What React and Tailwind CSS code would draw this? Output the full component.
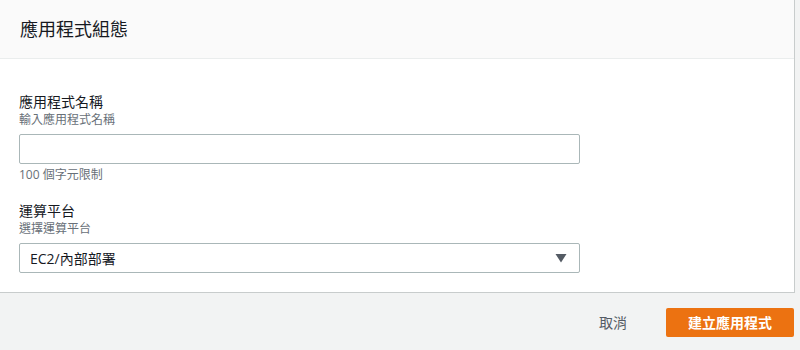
import React from 'react';

const font = { fontFamily: '"Open Sans", "Noto Sans CJK TC", sans-serif' };

const Field = ({ label, desc, children, hint }) => (
    <div className="flex flex-col">
        <div className="text-[14px] leading-[20px] text-[#16191f]">{label}</div>
        <div className="text-[12px] leading-[16px] text-[#687078]">{desc}</div>
        <div className="mt-[6px]">{children}</div>
        {hint && <div className="mt-[3px] text-[12px] leading-[16px] text-[#687078]">{hint}</div>}
    </div>
);

export default function App() {
    return (
        <div className="w-[800px] h-[350px] bg-[#f2f3f3] flex flex-col" style={font}>
            {/* Panel */}
            <div className="w-[795px] bg-white border-r border-b border-[#c8cccc]">
                <div className="h-[59px] bg-[#fafafa] border-b border-[#eaeded] flex items-center px-[20px]">
                    <h2 className="text-[18px] text-[#16191f]">應用程式組態</h2>
                </div>
                <div className="pt-[33px] pb-[19px] px-[19px] flex flex-col gap-[18px]">
                    <Field label="應用程式名稱" desc="輸入應用程式名稱" hint="100 個字元限制">
                        <input
                            type="text"
                            className="w-[561px] h-[30px] border border-[#aab7b8] rounded-[2px] px-[10px] text-[14px] outline-none"
                        />
                    </Field>
                    <Field label="運算平台" desc="選擇運算平台">
                        <div className="w-[561px] h-[30px] border border-[#aab7b8] rounded-[2px] flex items-center justify-between pl-[10px] pr-[12px]">
                            <span className="text-[14px] text-[#16191f]">EC2/內部部署</span>
                            <svg width="12" height="10" viewBox="0 0 12 10">
                                <path d="M0.5 1 L11.5 1 L6 9.5 Z" fill="#545b64" />
                            </svg>
                        </div>
                    </Field>
                </div>
            </div>

            {/* Footer */}
            <div className="flex-1 flex items-center justify-end pr-[6px] pt-[1px]">
                <button className="text-[14px] text-[#545b64] px-[4px] mr-[35px]">取消</button>
                <button className="w-[128px] h-[29px] bg-[#ec7211] rounded-[2px] text-white text-[14px] font-bold">
                    建立應用程式
                </button>
            </div>
        </div>
    );
}
